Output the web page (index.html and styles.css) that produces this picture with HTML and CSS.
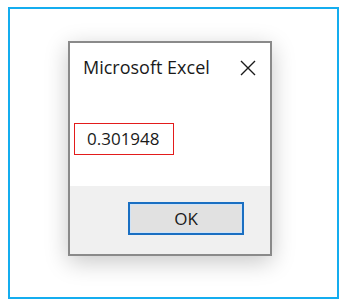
FILE: index.html
```html
<!DOCTYPE html>
<html lang="en">
<head>
  <meta charset="UTF-8" />
  <title>Microsoft Excel</title>
  <link rel="stylesheet" href="styles.css">
</head>
<body>

  <div class="moldura">
    <div class="dialogo">
      <div class="titulo">
        <span class="titulo-texto">Microsoft Excel</span>
        <svg class="fechar" width="16" height="16" viewBox="0 0 16 16">
          <path d="M1 1 L15 15 M15 1 L1 15" stroke="#1a1a1a" stroke-width="1.4" fill="none" />
        </svg>
      </div>

      <div class="conteudo">
        <div class="valor">0.301948</div>
      </div>

      <div class="rodape">
        <button class="botao-ok">OK</button>
      </div>
    </div>
  </div>

</body>
</html>
```

FILE: styles.css
```css
body {
  margin: 0;
  background-color: #fff;
  font-family: "Open Sans", "Noto Sans", Arial, sans-serif;
}

.moldura {
  box-sizing: border-box;
  margin: 7px 0 0 8px;
  width: 331px;
  height: 292px;
  border: 2px solid #14adef;
  padding: 32px 0 0 58px;
}

.dialogo {
  box-sizing: border-box;
  width: 204px;
  height: 215px;
  border: 2px solid #8a8a8a;
  background-color: #fff;
  box-shadow: 0 6px 22px rgba(0, 0, 0, 0.22);
  display: flex;
  flex-direction: column;
}

.titulo {
  display: flex;
  justify-content: space-between;
  align-items: center;
  padding: 10px 14px 0 13px;
  height: 28px;
}

.titulo-texto {
  font-size: 18px;
  color: #1a1a1a;
}

.fechar {
  margin-top: 1px;
}

.conteudo {
  flex: 1;
  padding: 42px 0 0 4px;
}

.valor {
  box-sizing: border-box;
  width: 100px;
  height: 32px;
  border: 1px solid #e31b1b;
  padding-left: 12px;
  font-size: 17px;
  line-height: 30px;
  color: #1a1a1a;
}

.rodape {
  height: 68px;
  background-color: #f0f0f0;
  padding: 16px 0 0 58px;
  box-sizing: border-box;
}

.botao-ok {
  box-sizing: border-box;
  width: 116px;
  height: 33px;
  border: 2px solid #1a6fc2;
  outline: 1px solid #cfe3f7;
  outline-offset: -3px;
  background-color: #e1e1e1;
  font-family: "Open Sans", "Noto Sans", Arial, sans-serif;
  font-size: 17px;
  color: #1a1a1a;
  padding: 0;
}
```
